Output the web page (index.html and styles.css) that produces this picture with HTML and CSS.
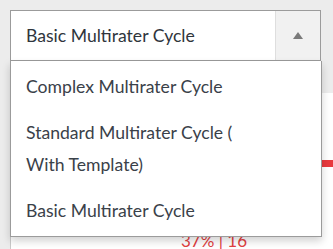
FILE: index.html
```html
<!DOCTYPE html>
<html lang="en">
<head>
    <meta charset="UTF-8">
    <title>Cycle select</title>
    <link rel="stylesheet" href="styles.css">
</head>
<body>

    <div class="page">
        <!-- select box -->
        <div class="select">
            <span class="select-value">Basic Multirater Cycle</span>
            <span class="select-arrow"><span class="caret"></span></span>
        </div>

        <!-- open list -->
        <ul class="options">
            <li>Complex Multirater Cycle</li>
            <li>Standard Multirater Cycle ( With Template)</li>
            <li>Basic Multirater Cycle</li>
        </ul>

        <!-- card underneath -->
        <div class="card">
            <div class="bar"></div>
            <div class="score">37% | 16</div>
        </div>
    </div>

</body>
</html>
```

FILE: styles.css
```css
body {
    margin: 0;
    background: #ececec;
    font-family: Lato, "Open Sans", sans-serif;
    overflow: hidden;
}
.page {
    position: relative;
    padding: 10px 0 0 10px;
}
.select {
    display: flex;
    width: 309px;
    height: 49px;
    background: white;
    border: 1px solid #9b9b9b;
}
.select-value {
    flex: 1;
    padding: 1px 0 0 15px;
    line-height: 48px;
    font-size: 17.6px;
    color: #2f353c;
}
.select-arrow {
    width: 44px;
    background: #f1f1f1;
    border-left: 1px solid #dedede;
    display: flex;
    align-items: center;
    justify-content: center;
}
.caret {
    width: 0;
    height: 0;
    border-left: 5px solid transparent;
    border-right: 5px solid transparent;
    border-bottom: 7px solid #7a7a7a;
}
.options {
    position: absolute;
    top: 61px;
    left: 10px;
    z-index: 2;
    width: 310px;
    margin: 0;
    padding: 3px 0 2px;
    list-style: none;
    background: white;
    border: 1px solid #9b9b9b;
    border-top: none;
    box-shadow: 0 4px 8px rgba(0, 0, 0, 0.18);
}
.options li {
    padding: 7px 50px 7px 15px;
    font-size: 17.6px;
    line-height: 32px;
    color: #3a4149;
}
.card {
    margin-top: 32px;
    height: 200px;
    background: white;
    border-left: 1px solid #c9c9c9;
}
.bar {
    width: 20px;
    height: 7px;
    margin-left: 311px;
    position: relative;
    top: 67px;
    background: #e8393d;
}
.score {
    padding-top: 130px;
    padding-left: 170px;
    font-size: 17px;
    color: #e2403f;
}
```
